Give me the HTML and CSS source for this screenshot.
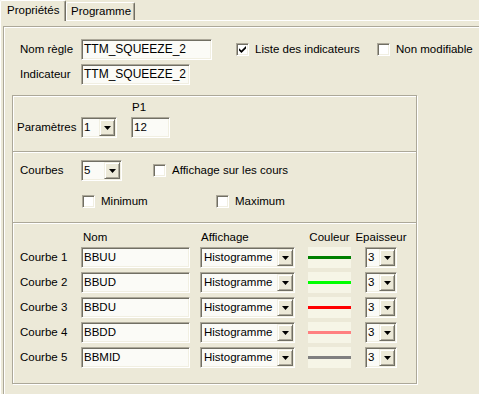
FILE: index.html
```html
<!DOCTYPE html>
<html lang="fr">
<head>
<meta charset="utf-8">
<title>Propriétés</title>
<link rel="stylesheet" href="styles.css">
</head>
<body>
<div class="tabs">
  <div class="tab tab-active">Propriétés</div>
  <div class="tab tab-prog">Programme</div>
</div>
<div class="page">
  <div class="frame">
    <div class="row">
      <span class="lbl lbl-main">Nom règle</span>
      <div class="edit edit-name">TTM_SQUEEZE_2</div>
      <div class="check check-liste"><span class="box"><svg width="7" height="7" viewBox="0 0 7 7"><path d="M0 2.2 L2.4 4.6 L7 0 L7 2.4 L2.4 7 L0 4.6 Z" fill="#000"/></svg></span><span>Liste des indicateurs</span></div>
      <div class="check"><span class="box"></span><span>Non modifiable</span></div>
    </div>
    <div class="row row-ind">
      <span class="lbl lbl-main">Indicateur</span>
      <div class="edit edit-ind">TTM_SQUEEZE_2</div>
    </div>
    <div class="group">
      <div class="sec sec-params">
        <span class="lbl lbl-params">Paramètres</span>
        <div class="combo combo-params"><span class="val">1</span><span class="btn"><svg width="7" height="4" viewBox="0 0 7 4"><path d="M0 0 H7 L3.5 4 Z" fill="#000"/></svg></span></div>
        <div class="p1">
          <span class="p1-lbl">P1</span>
          <div class="edit edit-p1">12</div>
        </div>
      </div>
      <div class="sec sec-courbes">
        <div class="courbes-row">
          <span class="lbl lbl-main">Courbes</span>
          <div class="combo combo-courbes"><span class="val">5</span><span class="btn"><svg width="7" height="4" viewBox="0 0 7 4"><path d="M0 0 H7 L3.5 4 Z" fill="#000"/></svg></span></div>
          <div class="check check-aff"><span class="box"></span><span>Affichage sur les cours</span></div>
        </div>
        <div class="minmax-row">
          <div class="check check-min"><span class="box"></span><span>Minimum</span></div>
          <div class="check"><span class="box"></span><span>Maximum</span></div>
        </div>
      </div>
      <div class="sec sec-table">
        <div class="grid">
          <span></span>
          <span class="hd hd-nom">Nom</span>
          <span class="hd hd-aff">Affichage</span>
          <span class="hd hd-center hd-col">Couleur</span>
          <span class="hd hd-center hd-ep">Epaisseur</span>

          <span class="lbl">Courbe 1</span>
          <div class="edit edit-nom">BBUU</div>
          <div class="combo combo-aff"><span class="val">Histogramme</span><span class="btn"><svg width="7" height="4" viewBox="0 0 7 4"><path d="M0 0 H7 L3.5 4 Z" fill="#000"/></svg></span></div>
          <div class="swatch"><i class="c-green"></i></div>
          <div class="combo combo-ep"><span class="val">3</span><span class="btn"><svg width="7" height="4" viewBox="0 0 7 4"><path d="M0 0 H7 L3.5 4 Z" fill="#000"/></svg></span></div>

          <span class="lbl">Courbe 2</span>
          <div class="edit edit-nom">BBUD</div>
          <div class="combo combo-aff"><span class="val">Histogramme</span><span class="btn"><svg width="7" height="4" viewBox="0 0 7 4"><path d="M0 0 H7 L3.5 4 Z" fill="#000"/></svg></span></div>
          <div class="swatch"><i class="c-lime"></i></div>
          <div class="combo combo-ep"><span class="val">3</span><span class="btn"><svg width="7" height="4" viewBox="0 0 7 4"><path d="M0 0 H7 L3.5 4 Z" fill="#000"/></svg></span></div>

          <span class="lbl">Courbe 3</span>
          <div class="edit edit-nom">BBDU</div>
          <div class="combo combo-aff"><span class="val">Histogramme</span><span class="btn"><svg width="7" height="4" viewBox="0 0 7 4"><path d="M0 0 H7 L3.5 4 Z" fill="#000"/></svg></span></div>
          <div class="swatch"><i class="c-red"></i></div>
          <div class="combo combo-ep"><span class="val">3</span><span class="btn"><svg width="7" height="4" viewBox="0 0 7 4"><path d="M0 0 H7 L3.5 4 Z" fill="#000"/></svg></span></div>

          <span class="lbl">Courbe 4</span>
          <div class="edit edit-nom">BBDD</div>
          <div class="combo combo-aff"><span class="val">Histogramme</span><span class="btn"><svg width="7" height="4" viewBox="0 0 7 4"><path d="M0 0 H7 L3.5 4 Z" fill="#000"/></svg></span></div>
          <div class="swatch"><i class="c-pink"></i></div>
          <div class="combo combo-ep"><span class="val">3</span><span class="btn"><svg width="7" height="4" viewBox="0 0 7 4"><path d="M0 0 H7 L3.5 4 Z" fill="#000"/></svg></span></div>

          <span class="lbl">Courbe 5</span>
          <div class="edit edit-nom">BBMID</div>
          <div class="combo combo-aff"><span class="val">Histogramme</span><span class="btn"><svg width="7" height="4" viewBox="0 0 7 4"><path d="M0 0 H7 L3.5 4 Z" fill="#000"/></svg></span></div>
          <div class="swatch"><i class="c-gray"></i></div>
          <div class="combo combo-ep"><span class="val">3</span><span class="btn"><svg width="7" height="4" viewBox="0 0 7 4"><path d="M0 0 H7 L3.5 4 Z" fill="#000"/></svg></span></div>
        </div>
      </div>
    </div>
  </div>
</div>
</body>
</html>
```

FILE: styles.css
```css
* { box-sizing: border-box; }
html, body { margin: 0; padding: 0; }
body {
  width: 479px;
  height: 394px;
  overflow: hidden;
  background: #ece9d8;
  font-family: "Liberation Sans", Arial, sans-serif;
  font-size: 11.5px;
  line-height: 13px;
  color: #000;
}

/* tabs */
.tabs { display: flex; align-items: flex-end; height: 20px; }
.tab {
  height: 18px;
  border-top: 1px solid #fff;
  border-left: 1px solid #fff;
  border-right: 1px solid #716f64;
  box-shadow: inset -1px 0 #aca899;
  border-radius: 2px 2px 0 0;
  line-height: 17px;
  white-space: nowrap;
}
.tab-active {
  width: 66px;
  height: 21px;
  margin-bottom: -1px;
  padding-left: 6px;
  line-height: 19px;
  background: #ece9d8;
  position: relative;
  z-index: 1;
}
.tab-prog { width: 69px; padding-left: 4px; }

/* page */
.page {
  height: 374px;
  border-top: 1px solid #fff;
  border-left: 1px solid #fff;
}
.frame {
  width: 476px;
  height: 368px;
  margin: 5px 0 0 2px;
  padding-top: 12px;
  border-top: 1px solid #aca899;
  border-left: 1px solid #aca899;
  box-shadow: inset 1px 1px #fff;
}

.row { display: flex; align-items: center; height: 21px; padding-left: 16px; }
.row-ind { margin-top: 4px; }
.lbl { white-space: nowrap; }
.lbl-main { width: 61px; flex: none; }

/* sunken edit */
.edit {
  flex: none;
  height: 21px;
  border: 1px solid;
  border-color: #aca899 #fff #fff #aca899;
  box-shadow: inset 1px 1px #716f64, inset -1px -1px #f1efe2;
  background: #fbfbf7;
  padding: 0 3px 0 2px;
  line-height: 19px;
  white-space: nowrap;
  overflow: hidden;
}
.edit-name { width: 131px; font-size: 12px; }
.edit-ind { width: 109px; font-size: 12px; }
.edit-p1 { width: 39px; }
.edit-nom { width: 109px; }

/* checkboxes */
.check { display: flex; align-items: center; white-space: nowrap; flex: none; }
.box {
  width: 13px;
  height: 13px;
  flex: none;
  margin-right: 6px;
  border: 1px solid;
  border-color: #aca899 #fff #fff #aca899;
  box-shadow: inset 1px 1px #716f64, inset -1px -1px #f1efe2;
  background: #fff;
  display: flex;
  align-items: center;
  justify-content: center;
}
.check-liste { margin-left: 24px; width: 141px; }

/* group */
.group {
  width: 405px;
  margin: 10px 0 0 8px;
  border: 1px solid #aca899;
  box-shadow: inset 1px 1px #fff, 1px 1px #fff;
}
.sec + .sec {
  border-top: 1px solid #aca899;
  box-shadow: inset 0 1px #fff;
}
.sec-params {
  display: flex;
  align-items: flex-end;
  padding: 5px 0 13px 4px;
}
.lbl-params { width: 64px; height: 21px; line-height: 21px; flex: none; }
.p1 { display: flex; flex-direction: column; margin-left: 14px; }
.p1-lbl { line-height: 13px; margin-bottom: 3px; padding-left: 1px; }

/* combo */
.combo {
  flex: none;
  display: flex;
  height: 21px;
  padding: 1px;
  border: 1px solid;
  border-color: #aca899 #fff #fff #aca899;
  box-shadow: inset 1px 1px #716f64, inset -1px -1px #f1efe2;
  background: #fbfbf7;
}
.combo .val {
  flex: 1;
  min-width: 0;
  padding-left: 1px;
  line-height: 17px;
  white-space: nowrap;
  overflow: hidden;
}
.combo .btn {
  width: 16px;
  height: 17px;
  flex: none;
  background: #ece9d8;
  border: 1px solid;
  border-color: #f1efe2 #716f64 #716f64 #f1efe2;
  box-shadow: inset 1px 1px #fff, inset -1px -1px #aca899;
  display: flex;
  align-items: center;
  justify-content: center;
}
.combo-params { width: 36px; }
.combo-courbes { width: 41px; }
.combo-aff { width: 95px; }
.combo-aff .val { padding-left: 2px; }
.combo-ep { width: 32px; }

.sec-courbes { padding: 8px 0 14px 7px; }
.courbes-row { display: flex; align-items: center; height: 21px; }
.check-aff { margin-left: 31px; }
.minmax-row { display: flex; align-items: center; height: 13px; margin-top: 14px; padding-left: 62px; }
.check-min { width: 134px; }

/* table */
.sec-table { padding: 8px 0 15px 7px; }
.grid {
  display: grid;
  grid-template-columns: 61px 119px 108px 57px 32px;
  grid-template-rows: 12px repeat(5, 21px);
  row-gap: 4px;
  align-items: center;
}
.grid > .lbl { line-height: 21px; }
.hd { white-space: nowrap; align-self: start; line-height: 13px; }
.hd-nom { padding-left: 2px; }
.hd-aff { padding-left: 1px; }
.hd-center { display: flex; justify-content: center; }
.hd-col { width: 43px; }
.hd-ep { width: 32px; }

.swatch {
  width: 43px;
  height: 21px;
  background: #f6f5e7;
  display: flex;
  align-items: center;
}
.swatch i { display: block; width: 100%; height: 3px; }
.c-green { background: #008000; }
.c-lime { background: #00ff00; }
.c-red { background: #ff0000; }
.c-pink { background: #ff8080; }
.c-gray { background: #808080; }
```
